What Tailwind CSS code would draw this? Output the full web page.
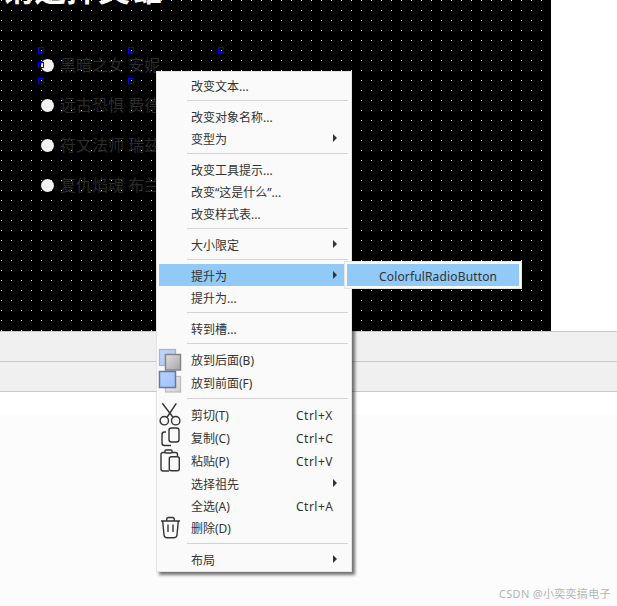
<!DOCTYPE html>
<html lang="zh-CN">
<head>
  <meta charset="UTF-8" />
  <title>Designer</title>
  <script src="https://cdn.jsdelivr.net/npm/@tailwindcss/browser@4"></script>
</head>
<body class="w-[617px] h-[606px] overflow-hidden bg-white font-['Noto_Sans','Noto_Sans_CJK_SC',sans-serif] text-[12px] text-[#333]">
  <div class="relative w-[617px] h-[606px]">
    <!-- form canvas -->
    <div class="relative w-[551px] h-[331px] bg-black overflow-hidden">
      <svg class="absolute inset-0" width="551" height="331">
        <defs><pattern id="grid" width="10" height="10" patternUnits="userSpaceOnUse"><rect x="1" y="0" width="1" height="1" fill="#fff"/></pattern></defs>
        <rect width="551" height="331" fill="url(#grid)"/>
      </svg>
      <div class="relative text-white text-[32px] font-bold leading-[32px] -mt-[27px] ml-[2px]">请选择英雄</div>
      <div class="relative flex flex-col gap-[20px] mt-[50px] pl-[41px] text-[#2b2b2b] text-[16px]">
        <div class="flex items-center gap-[6px] h-[20px]"><span class="w-[13px] h-[13px] rounded-full bg-[#f2f2f2]"></span>黑暗之女 安妮</div>
        <div class="flex items-center gap-[6px] h-[20px]"><span class="w-[13px] h-[13px] rounded-full bg-[#f2f2f2]"></span>远古恐惧 费德提克</div>
        <div class="flex items-center gap-[6px] h-[20px]"><span class="w-[13px] h-[13px] rounded-full bg-[#f2f2f2]"></span>符文法师 瑞兹</div>
        <div class="flex items-center gap-[6px] h-[20px]"><span class="w-[13px] h-[13px] rounded-full bg-[#f2f2f2]"></span>复仇焰魂 布兰德</div>
      </div>
    </div>
    <div class="h-[31px] bg-[#f0f0f0] border-y border-[#c8c8c8]"></div>
    <div class="h-[30px] bg-[#f0f0f0] border-b border-[#c8c8c8]"></div>
    <div class="h-[23px] bg-white"></div>
    <div class="h-[191px] bg-[#fcfcfc]"></div>

    <!-- selection handles -->
    <span class="absolute left-[38px] top-[47px] w-[6px] h-[6px] border border-[#0000ff]"></span>
    <span class="absolute left-[128px] top-[47px] w-[6px] h-[6px] border border-[#0000ff]"></span>
    <span class="absolute left-[218px] top-[47px] w-[6px] h-[6px] border border-[#0000ff]"></span>
    <span class="absolute left-[38px] top-[62px] w-[6px] h-[6px] border border-[#0000ff]"></span>
    <span class="absolute left-[38px] top-[78px] w-[6px] h-[6px] border border-[#0000ff]"></span>
    <span class="absolute left-[128px] top-[78px] w-[6px] h-[6px] border border-[#0000ff]"></span>

    <span class="absolute left-[499px] top-[586px] text-[11px] tracking-[0.3px] leading-[16px] text-[#b4b4b4]">CSDN @小奕奕搞电子</span>

    <!-- context menu -->
    <div class="absolute left-[156px] top-[71px] w-[196px] h-[501px] bg-[#fafafa] border border-[#e4e4e4] pt-[2px] shadow-[3px_3px_3px_rgba(0,0,0,0.55)]">
      <div class="flex items-center h-[22px] mx-[2px] pl-[32px]"><span class="pt-[3px]">改变文本...</span></div>
      <div class="flex items-center h-[9px] ml-[30px] mr-[3px]"><div class="w-full h-px bg-[#d4d4d4]"></div></div>
      <div class="flex items-center h-[22px] mx-[2px] pl-[32px]"><span class="pt-[3px]">改变对象名称...</span></div>
      <div class="flex items-center h-[22px] mx-[2px] pl-[32px]"><span class="pt-[3px]">变型为</span>
        <svg class="ml-auto mr-[12px]" width="4" height="8"><polygon points="0,0 4,4 0,8" fill="#333"/></svg>
      </div>
      <div class="flex items-center h-[9px] ml-[30px] mr-[3px]"><div class="w-full h-px bg-[#d4d4d4]"></div></div>
      <div class="flex items-center h-[22px] mx-[2px] pl-[32px]"><span class="pt-[3px]">改变工具提示...</span></div>
      <div class="flex items-center h-[22px] mx-[2px] pl-[32px]"><span class="pt-[3px]">改变“这是什么”...</span></div>
      <div class="flex items-center h-[22px] mx-[2px] pl-[32px]"><span class="pt-[3px]">改变样式表...</span></div>
      <div class="flex items-center h-[9px] ml-[30px] mr-[3px]"><div class="w-full h-px bg-[#d4d4d4]"></div></div>
      <div class="flex items-center h-[22px] mx-[2px] pl-[32px]"><span class="pt-[3px]">大小限定</span>
        <svg class="ml-auto mr-[12px]" width="4" height="8"><polygon points="0,0 4,4 0,8" fill="#333"/></svg>
      </div>
      <div class="flex items-center h-[9px] ml-[30px] mr-[3px]"><div class="w-full h-px bg-[#d4d4d4]"></div></div>
      <div class="flex items-center h-[22px] mx-[2px] pl-[32px] bg-[#91c9f7]"><span class="pt-[3px]">提升为</span>
        <svg class="ml-auto mr-[12px]" width="4" height="8"><polygon points="0,0 4,4 0,8" fill="#333"/></svg>
      </div>
      <div class="flex items-center h-[22px] mx-[2px] pl-[32px]"><span class="pt-[3px]">提升为...</span></div>
      <div class="flex items-center h-[9px] ml-[30px] mr-[3px]"><div class="w-full h-px bg-[#d4d4d4]"></div></div>
      <div class="flex items-center h-[22px] mx-[2px] pl-[32px]"><span class="pt-[3px]">转到槽...</span></div>
      <div class="flex items-center h-[9px] ml-[30px] mr-[3px]"><div class="w-full h-px bg-[#d4d4d4]"></div></div>

      <div class="flex items-center h-[23px] mx-[2px]">
        <span class="flex items-start w-[32px] h-full"><svg class="shrink-0 -ml-[1px] overflow-visible" width="24" height="23">
          <defs>
            <linearGradient id="blue" x1="0" y1="0" x2="1" y2="1"><stop offset="0" stop-color="#c4d8fb"/><stop offset="1" stop-color="#a8c4f2"/></linearGradient>
            <linearGradient id="gray" x1="0" y1="0" x2="1" y2="1"><stop offset="0" stop-color="#e2e2e2"/><stop offset="1" stop-color="#a4a4a4"/></linearGradient>
          </defs>
          <rect x="1.500" y="1.500" width="16" height="16" fill="url(#blue)" stroke="#a9b5cb" stroke-width="1.300"/>
          <rect x="7.500" y="6.500" width="15" height="15.500" fill="url(#gray)" stroke="#858585" stroke-width="1.500"/>
        </svg></span><span class="pt-[3px]">放到后面(B)</span>
      </div>
      <div class="flex items-center h-[23px] mx-[2px]">
        <span class="flex items-start w-[32px] h-full"><svg class="shrink-0 -ml-[1px] overflow-visible" width="24" height="23">
          <defs>
            <linearGradient id="blue2" x1="0" y1="0" x2="1" y2="1"><stop offset="0" stop-color="#b8d2ff"/><stop offset="1" stop-color="#a0c0fb"/></linearGradient>
            <linearGradient id="gray2" x1="0" y1="0" x2="1" y2="1"><stop offset="0" stop-color="#f0f0f0"/><stop offset="1" stop-color="#d0d0d0"/></linearGradient>
          </defs>
          <rect x="7.500" y="5.500" width="15" height="15.500" fill="url(#gray2)" stroke="#bdbdbd" stroke-width="1.300"/>
          <rect x="1.500" y="0.500" width="16" height="16" fill="url(#blue2)" stroke="#66789a" stroke-width="1.500"/>
        </svg></span><span class="pt-[3px]">放到前面(F)</span>
      </div>
      <div class="flex items-center h-[9px] ml-[30px] mr-[3px]"><div class="w-full h-px bg-[#d4d4d4]"></div></div>

      <div class="flex items-center h-[23px] mx-[2px]">
        <span class="flex items-start w-[32px] h-full"><svg class="shrink-0 -ml-[1px] overflow-visible" width="24" height="23" fill="none" stroke="#333" stroke-width="1.400">
          <circle cx="6.300" cy="17.700" r="4.200"/><circle cx="17.700" cy="17.700" r="4.200"/>
          <path d="M4.300 .3 14.800 14M18.300 .3 9.200 14"/>
        </svg></span><span class="w-[105px] pt-[3px]">剪切(T)</span><span class="pt-[3px] tracking-[0.5px]">Ctrl+X</span>
      </div>
      <div class="flex items-center h-[23px] mx-[2px]">
        <span class="flex items-start w-[32px] h-full"><svg class="shrink-0 -ml-[1px] overflow-visible" width="24" height="23" fill="none" stroke="#333" stroke-width="1.400">
          <rect x="11" y="2" width="10" height="14" rx="2.500"/>
          <path d="M8 6H6.500A2.500 2.500 0 0 0 4 8.500V17A2.500 2.500 0 0 0 6.500 19.500H13"/>
        </svg></span><span class="w-[105px] pt-[3px]">复制(C)</span><span class="pt-[3px] tracking-[0.5px]">Ctrl+C</span>
      </div>
      <div class="flex items-center h-[23px] mx-[2px]">
        <span class="flex items-start w-[32px] h-full"><svg class="shrink-0 -ml-[1px] overflow-visible" width="24" height="23" fill="none" stroke="#333" stroke-width="1.400">
          <rect x="7" y="1" width="7" height="3" rx="1"/>
          <rect x="11.300" y="7.700" width="10" height="14" rx="2"/>
          <path d="M7 3.500H5A2 2 0 0 0 3 5.500V20A2 2 0 0 0 5 22H11M14 3.500H17.500A2 2 0 0 1 19.500 5.500V7"/>
        </svg></span><span class="w-[105px] pt-[3px]">粘贴(P)</span><span class="pt-[3px] tracking-[0.5px]">Ctrl+V</span>
      </div>
      <div class="flex items-center h-[22px] mx-[2px] pl-[32px]"><span class="pt-[3px]">选择祖先</span>
        <svg class="ml-auto mr-[12px]" width="4" height="8"><polygon points="0,0 4,4 0,8" fill="#333"/></svg>
      </div>
      <div class="flex items-center h-[22px] mx-[2px] pl-[32px]"><span class="w-[105px] pt-[3px]">全选(A)</span><span class="pt-[3px] tracking-[0.5px]">Ctrl+A</span></div>
      <div class="flex items-center h-[23px] mx-[2px]">
        <span class="flex items-start w-[32px] h-full"><svg class="shrink-0 -ml-[1px] overflow-visible" width="24" height="23" fill="none" stroke="#333" stroke-width="1.400">
          <path d="M3 5H22M8.700 5V3.500Q8.700 1.500 10.500 1.500H14.500Q16.300 1.500 16.300 3.500V5"/>
          <path d="M4.700 5 6 19Q6.300 21.700 9 21.700H16Q18.700 21.700 19 19L20.300 5"/>
          <path d="M10 8.500V16M15 8.500V16"/>
        </svg></span><span class="pt-[3px]">删除(D)</span>
      </div>
      <div class="flex items-center h-[9px] ml-[30px] mr-[3px]"><div class="w-full h-px bg-[#d4d4d4]"></div></div>
      <div class="flex items-center h-[22px] mx-[2px] pl-[32px]"><span class="pt-[3px]">布局</span>
        <svg class="ml-auto mr-[12px]" width="4" height="8"><polygon points="0,0 4,4 0,8" fill="#333"/></svg>
      </div>
    </div>

    <!-- promoted-to submenu -->
    <div class="absolute left-[344px] top-[261px] w-[178px] h-[28px] bg-[#fafafa] border border-[#e4e4e4] p-[2px]">
      <div class="flex items-center h-full pl-[32px] bg-[#91c9f7] tracking-[0.15px]"><span class="pt-[3px]">ColorfulRadioButton</span></div>
    </div>
  </div>
</body>
</html>
